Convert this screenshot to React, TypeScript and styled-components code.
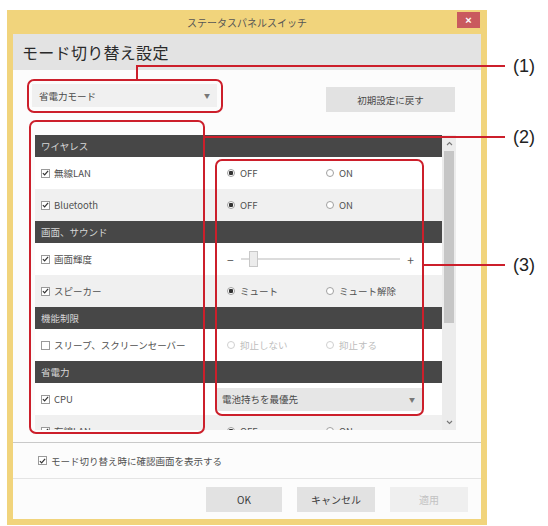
import React from "react";
import styled, { createGlobalStyle } from "styled-components";

const Global = createGlobalStyle`
  html, body { margin: 0; padding: 0; background: #ffffff; }
  body { font-family: "Noto Sans CJK JP", "Noto Sans", "Liberation Sans", sans-serif; color: #333; }
  * { box-sizing: border-box; }
`;

const Page = styled.div`
  position: relative;
  width: 548px;
  height: 526px;
  overflow: hidden;
`;

const Win = styled.div`
  margin: 10px 0 0 7px;
  width: 480px;
  height: 515px;
  background: #f1d47c;
  padding: 0 6px 6px 6px;
  display: flex;
  flex-direction: column;
`;

const TitleBar = styled.div`
  height: 24px;
  position: relative;
  display: flex;
  align-items: center;
  justify-content: center;
  font-size: 10px;
  color: #555;
`;

const CloseBtn = styled.div`
  position: absolute;
  right: 1px;
  top: 2px;
  width: 23px;
  height: 16px;
  background: #c95a5e;
  color: #fff;
  font-size: 11px;
  font-family: "Liberation Sans", sans-serif;
  font-weight: bold;
  display: flex;
  align-items: center;
  justify-content: center;
`;

const Body = styled.div`
  flex: 1;
  background: #fcfcfc;
  display: flex;
  flex-direction: column;
`;

const Heading = styled.div`
  height: 36px;
  background: #e3e3e3;
  padding-left: 9px;
  display: flex;
  align-items: center;
  font-size: 16px;
  color: #2a2a2a;
  letter-spacing: 0.3px;
`;

const TopRow = styled.div`
  margin-top: 14px;
  padding: 0 26px 0 19px;
  display: flex;
  justify-content: space-between;
  align-items: flex-start;
`;

const Select = styled.div<{ $w: number; $bg?: string }>`
  width: ${(p) => p.$w}px;
  height: 23px;
  background: ${(p) => p.$bg || "#f0f0f0"};
  display: flex;
  align-items: center;
  justify-content: space-between;
  padding: 0 7px 0 7px;
  font-size: 9.5px;
  color: #4a4a4a;
`;

const Caret = styled.span`
  font-size: 6px;
  color: #777;
`;

const Button = styled.div<{ $w: number; $disabled?: boolean }>`
  width: ${(p) => p.$w}px;
  height: 25px;
  background: ${(p) => (p.$disabled ? "#efefef" : "#e2e2e2")};
  color: ${(p) => (p.$disabled ? "#c2c2c2" : "#3a3a3a")};
  font-size: 10px;
  display: flex;
  align-items: center;
  justify-content: center;
`;

const ResetButton = styled(Button)`
  margin-top: 3px;
  font-size: 9.5px;
  color: #4a4a4a;
`;

const List = styled.div`
  margin: 23px 0 0 22px;
  width: 421px;
  height: 295px;
  display: flex;
  background: #fafafa;
`;

const Rows = styled.div`
  width: 407px;
  height: 100%;
  overflow: hidden;
  display: flex;
  flex-direction: column;
`;

const Header = styled.div`
  flex: none;
  height: 22px;
  background: #474747;
  color: #d8d8d8;
  font-size: 9.5px;
  display: flex;
  align-items: center;
  padding-left: 6px;
`;

const Row = styled.div<{ $alt?: boolean }>`
  flex: none;
  height: 32px;
  display: grid;
  grid-template-columns: 180px 227px;
  align-items: center;
  background: ${(p) => (p.$alt ? "#f0f0f0" : "#ffffff")};
  font-size: 9.5px;
  color: #505050;
`;

const Label = styled.div`
  display: flex;
  align-items: center;
  gap: 4px;
  padding-left: 6px;
`;

const Box = styled.span`
  width: 9px;
  height: 9px;
  border: 1px solid #9a9a9a;
  background: #fff;
  display: inline-flex;
  align-items: center;
  justify-content: center;
`;

const Control = styled.div`
  display: grid;
  grid-template-columns: 99px 1fr;
  align-items: center;
  padding-left: 12px;
`;

const RadioItem = styled.div<{ $disabled?: boolean }>`
  display: flex;
  align-items: center;
  gap: 5px;
  color: ${(p) => (p.$disabled ? "#bdbdbd" : "#505050")};
`;

const Dot = styled.span<{ $on?: boolean; $disabled?: boolean }>`
  width: 8px;
  height: 8px;
  border-radius: 50%;
  border: 1px solid ${(p) => (p.$disabled ? "#d0d0d0" : "#a0a0a0")};
  background: ${(p) => (p.$on ? "radial-gradient(circle, #333 0 2px, #fff 2.5px)" : "#fff")};
`;

const SliderWrap = styled.div`
  display: flex;
  align-items: center;
  padding: 0 28px 0 12px;
  gap: 7px;
  color: #555;
  font-size: 12px;
`;

const Track = styled.div`
  flex: 1;
  height: 2px;
  background: #dcdcdc;
  position: relative;
`;

const Thumb = styled.div`
  position: absolute;
  left: 8px;
  top: -7px;
  width: 9px;
  height: 16px;
  background: #ececec;
  border: 1px solid #c8c8c8;
`;

const SelectCell = styled.div`
  padding-left: 0;
`;

const Scroll = styled.div`
  width: 14px;
  height: 100%;
  background: #ececec;
  display: flex;
  flex-direction: column;
  align-items: center;
`;

const Arrow = styled.div`
  height: 16px;
  display: flex;
  align-items: center;
  justify-content: center;
`;

const ScrollTrack = styled.div`
  flex: 1;
  width: 100%;
`;

const ScrollThumb = styled.div`
  margin: 0 auto;
  width: 10px;
  height: 172px;
  background: #c6c6c6;
`;

const Sep = styled.div<{ $c: string }>`
  height: 1px;
  background: ${(p) => p.$c};
`;

const BottomSep = styled(Sep)`
  margin-top: 12px;
`;

const ConfirmRow = styled.div`
  height: 35px;
  display: flex;
  align-items: center;
  gap: 4px;
  padding-left: 25px;
  font-size: 9.5px;
  color: #505050;
`;

const Buttons = styled.div`
  flex: 1;
  display: flex;
  justify-content: flex-end;
  align-items: flex-start;
  gap: 15px;
  padding: 8px 13px 0 0;
`;

const Overlay = styled.div<{ $x: number; $y: number; $w: number; $h: number }>`
  position: absolute;
  left: ${(p) => p.$x}px;
  top: ${(p) => p.$y}px;
  width: ${(p) => p.$w}px;
  height: ${(p) => p.$h}px;
  border: 2.5px solid #cc1f2b;
  border-radius: 7px;
  pointer-events: none;
`;

const HLine = styled.div<{ $x: number; $y: number; $w: number }>`
  position: absolute;
  left: ${(p) => p.$x}px;
  top: ${(p) => p.$y}px;
  width: ${(p) => p.$w}px;
  height: 2px;
  background: #cc1f2b;
`;

const VLine = styled.div<{ $x: number; $y: number; $h: number }>`
  position: absolute;
  left: ${(p) => p.$x}px;
  top: ${(p) => p.$y}px;
  width: 2px;
  height: ${(p) => p.$h}px;
  background: #cc1f2b;
`;

const Callout = styled.div<{ $y: number }>`
  position: absolute;
  left: 513px;
  top: ${(p) => p.$y}px;
  font-family: "Liberation Sans", "Noto Sans", sans-serif;
  font-size: 18px;
  color: #222;
  line-height: 20px;
`;

const Check = () => (
  <svg width="8" height="8" viewBox="0 0 8 8">
    <path d="M1 4.2 L3 6.2 L7 1.5" stroke="#333" strokeWidth="1.4" fill="none" />
  </svg>
);

const CheckBox: React.FC<{ checked?: boolean }> = ({ checked }) => (
  <Box>{checked ? <Check /> : null}</Box>
);

const Radio: React.FC<{ on?: boolean; disabled?: boolean; label: string }> = ({ on, disabled, label }) => (
  <RadioItem $disabled={disabled}>
    <Dot $on={on} $disabled={disabled} />
    {label}
  </RadioItem>
);

const RadioPair: React.FC<{ a: string; b: string; disabled?: boolean }> = ({ a, b, disabled }) => (
  <Control>
    <Radio on={!disabled} disabled={disabled} label={a} />
    <Radio disabled={disabled} label={b} />
  </Control>
);

const Chevron: React.FC<{ up?: boolean }> = ({ up }) => (
  <svg width="7" height="5" viewBox="0 0 7 5">
    <path d={up ? "M1 4 L3.5 1.5 L6 4" : "M1 1 L3.5 3.5 L6 1"} stroke="#777" strokeWidth="1.1" fill="none" />
  </svg>
);

export default function App() {
  return (
    <Page>
      <Global />
      <Win>
        <TitleBar>
          ステータスパネルスイッチ
          <CloseBtn>×</CloseBtn>
        </TitleBar>
        <Body>
          <Heading>モード切り替え設定</Heading>
          <TopRow>
            <Select $w={185}>
              省電力モード
              <Caret>▼</Caret>
            </Select>
            <ResetButton $w={129}>初期設定に戻す</ResetButton>
          </TopRow>
          <List>
            <Rows>
              <Header>ワイヤレス</Header>
              <Row>
                <Label><CheckBox checked />無線LAN</Label>
                <RadioPair a="OFF" b="ON" />
              </Row>
              <Row $alt>
                <Label><CheckBox checked />Bluetooth</Label>
                <RadioPair a="OFF" b="ON" />
              </Row>
              <Header>画面、サウンド</Header>
              <Row>
                <Label><CheckBox checked />画面輝度</Label>
                <SliderWrap>
                  −
                  <Track><Thumb /></Track>
                  +
                </SliderWrap>
              </Row>
              <Row $alt>
                <Label><CheckBox checked />スピーカー</Label>
                <RadioPair a="ミュート" b="ミュート解除" />
              </Row>
              <Header>機能制限</Header>
              <Row>
                <Label><CheckBox />スリープ、スクリーンセーバー</Label>
                <RadioPair a="抑止しない" b="抑止する" disabled />
              </Row>
              <Header>省電力</Header>
              <Row>
                <Label><CheckBox checked />CPU</Label>
                <SelectCell>
                  <Select $w={207} $bg="#e6e6e6">
                    電池持ちを最優先
                    <Caret>▼</Caret>
                  </Select>
                </SelectCell>
              </Row>
              <Row $alt>
                <Label><CheckBox checked />有線LAN</Label>
                <RadioPair a="OFF" b="ON" />
              </Row>
            </Rows>
            <Scroll>
              <Arrow><Chevron up /></Arrow>
              <ScrollTrack><ScrollThumb /></ScrollTrack>
              <Arrow><Chevron /></Arrow>
            </Scroll>
          </List>
          <BottomSep $c="#c9c9c9" />
          <ConfirmRow>
            <CheckBox checked />
            モード切り替え時に確認画面を表示する
          </ConfirmRow>
          <Sep $c="#e4e4e4" />
          <Buttons>
            <Button $w={76}>OK</Button>
            <Button $w={78}>キャンセル</Button>
            <Button $w={78} $disabled>適用</Button>
          </Buttons>
        </Body>
      </Win>

      <Overlay $x={27} $y={79} $w={196} $h={34} />
      <VLine $x={136} $y={65} $h={15} />
      <HLine $x={136} $y={65} $w={369} />
      <Callout $y={56}>(1)</Callout>

      <Overlay $x={29} $y={120} $w={176} $h={314} />
      <HLine $x={204} $y={136} $w={301} />
      <Callout $y={127}>(2)</Callout>

      <Overlay $x={215} $y={159} $w={209} $h={257} />
      <HLine $x={423} $y={264} $w={82} />
      <Callout $y={255}>(3)</Callout>
    </Page>
  );
}
